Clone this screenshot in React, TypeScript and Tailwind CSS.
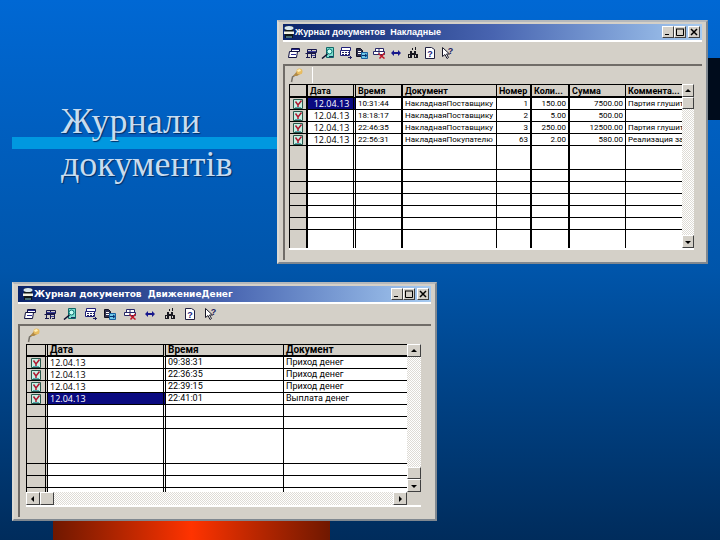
import React from 'react';
import clsx from 'clsx';

type Line = 'single' | 'thick' | 'double';

interface Column {
  title: string;
  width?: number;
  line: Line;
  align?: 'right';
}

interface JournalRow {
  cells: string[];
  selected?: boolean;
}

const lineClass: Record<Line, string> = {
  single: 'border-r',
  thick: 'border-r-2',
  double: 'border-r-[3px] border-double',
};

const invoiceColumns: Column[] = [
  { title: 'Дата', width: 48, line: 'double' },
  { title: 'Время', width: 47, line: 'thick' },
  { title: 'Документ', width: 94, line: 'single' },
  { title: 'Номер', width: 35, line: 'thick', align: 'right' },
  { title: 'Коли...', width: 38, line: 'thick', align: 'right' },
  { title: 'Сумма', width: 56, line: 'single', align: 'right' },
  { title: 'Коммента...', line: 'single' },
];

const invoiceRows: JournalRow[] = [
  { cells: ['12.04.13', '10:31:44', 'НакладнаяПоставщику', '1', '150.00', '7500.00', 'Партия глушит'], selected: true },
  { cells: ['12.04.13', '18:18:17', 'НакладнаяПоставщику', '2', '5.00', '500.00', ''] },
  { cells: ['12.04.13', '22:46:35', 'НакладнаяПоставщику', '3', '250.00', '12500.00', 'Партия глушит'] },
  { cells: ['12.04.13', '22:56:31', 'НакладнаяПокупателю', '63', '2.00', '580.00', 'Реализация за'] },
];

const moneyColumns: Column[] = [
  { title: 'Дата', width: 118, line: 'double' },
  { title: 'Время', width: 118, line: 'single' },
  { title: 'Документ', line: 'single' },
];

const moneyRows: JournalRow[] = [
  { cells: ['12.04.13', '09:38:31', 'Приход денег'] },
  { cells: ['12.04.13', '22:36:35', 'Приход денег'] },
  { cells: ['12.04.13', '22:39:15', 'Приход денег'] },
  { cells: ['12.04.13', '22:41:01', 'Выплата денег'], selected: true },
];

const toolIcons: { label: string; art: React.ReactNode }[] = [
  {
    label: 'Новый',
    art: (
      <>
        <path d="M4.5 1.5h8v3h-8zM2.5 4.5h8l-1 6h-8z" fill="#fff" stroke="#101040" />
        <path d="M5 2.5h7M4 7.5h5" stroke="#2a2a90" />
      </>
    ),
  },
  {
    label: 'Открыть',
    art: (
      <>
        <path d="M3.5 2.5h9v3h-9zM1.5 6.5h10M3.5 4v7M7.5 2v9M2 10.5h4M9 10.5h3M11.5 6v4" fill="none" stroke="#18184c" />
        <path d="M4 4.5h8M8 8.5h3" stroke="#40409c" />
      </>
    ),
  },
  {
    label: 'Просмотр',
    art: (
      <>
        <path d="M5.5.5h7v10h-7z" fill="#7fe0d0" stroke="#106868" />
        <circle cx="8.5" cy="4.5" r="2.5" fill="#c8fff4" stroke="#087070" />
        <path d="M6.5 7L1 11.5" stroke="#101030" strokeWidth="1.5" />
        <path d="M8 9.5h4" stroke="#203060" />
      </>
    ),
  },
  {
    label: 'Копировать строку',
    art: (
      <>
        <path d="M3.5.5h9v3h-9zM2.5 3.5h9v5h-9z" fill="#fff" stroke="#202078" />
        <path d="M4 5.5h7M4 7.5h7" stroke="#202060" strokeDasharray="2 1" />
        <path d="M10 10.5h4M12.5 9v3" stroke="#202060" />
      </>
    ),
  },
  {
    label: 'Ввести на основании',
    art: (
      <>
        <path d="M1.5 1.5h4l2 2v6h-6z" fill="#303050" stroke="#101020" />
        <path d="M3 4.5h3M3 6.5h3" stroke="#fff" />
        <path d="M6.5 5.5h6v6h-6z" fill="#70c8e8" stroke="#1860a0" />
        <path d="M7 8.5h4M10 7l2 1.5-2 1.5" fill="none" stroke="#083070" />
      </>
    ),
  },
  {
    label: 'Удалить',
    art: (
      <>
        <path d="M3.5 1.5h8v3h-8zM1.5 4.5h11v3h-11z" fill="#fff" stroke="#282868" />
        <path d="M7 2v5" stroke="#282868" />
        <path d="M6.5 6.5l6 5M12.5 6l-5 5.5" stroke="#c01828" strokeWidth="1.5" />
      </>
    ),
  },
  {
    label: 'Интервал',
    art: <path d="M2 6l3-3v2h4V3l3 3-3 3V7H5v2z" fill="#18188c" />,
  },
  {
    label: 'Найти',
    art: (
      <>
        <path d="M4 4h2v3H4zM8 4h2v3H8zM2 7h4v4H2zM8 7h4v4H8zM6 6h2v2H6z" fill="#181820" />
        <path d="M3.5 8v2M9.5 8v2" stroke="#d4d0c8" />
        <path d="M6.5 1v2M9.5 0v3" stroke="#181820" />
      </>
    ),
  },
  {
    label: 'Справка',
    art: (
      <>
        <path d="M2.5.5h6l3 2v9h-9z" fill="#fff" stroke="#202040" />
        <text x="7" y="9.5" textAnchor="middle" fontSize="9" fontWeight="bold" fill="#18187c">?</text>
      </>
    ),
  },
  {
    label: 'Что это?',
    art: (
      <>
        <path d="M2.5.5v9l2.5-2 2 4 1.5-1-2-3.5h3z" fill="#fff" stroke="#181828" />
        <text x="10.5" y="7" textAnchor="middle" fontSize="9" fontWeight="bold" fill="#202060">?</text>
      </>
    ),
  },
];

const Pencil = () => (
  <svg viewBox="0 0 16 16" className="h-4 w-4" aria-hidden="true">
    <path d="M2.5 15l1-5 3-2" fill="none" stroke="#77736b" strokeWidth="1.5" />
    <path d="M4 9l5-6 4 3-5 3z" fill="#b08a48" />
    <circle cx="10.5" cy="4.5" r="3" fill="#e8bc60" />
    <path d="M8 3l3-1 1 2-3 1z" fill="#fff0b8" />
  </svg>
);

const RowMark = () => (
  <svg viewBox="0 0 10 10" className="mx-auto h-2.5 w-2.5" aria-hidden="true">
    <path d="M.5.5h9v9h-9z" fill="#c8f0e4" stroke="#28584c" />
    <path d="M2 8.5h6" stroke="#58a8b0" />
    <path d="M2.5 2.5l2.5 3.500 3.500-4.500M5 6v2" fill="none" stroke="#b01830" strokeWidth="1.5" />
  </svg>
);

const AppIcon = () => (
  <svg viewBox="0 0 12 14" className="h-3.5 w-3 shrink-0" aria-hidden="true">
    <path d="M2 1h8v12H2z" fill="#101818" />
    <ellipse cx="6" cy="3" rx="4.5" ry="2" fill="#d8e8f0" />
    <path d="M1 6.5h10v2.5H1z" fill="#f4f4e4" />
    <path d="M3 11h6v2H3z" fill="#487078" />
  </svg>
);

const bevel = 'flex items-center justify-center border border-t-white border-l-white border-r-[#404040] border-b-[#404040] bg-[#d4d0c8]';
const dither = 'bg-[repeating-conic-gradient(#ffffff_0_25%,#dedbd5_0_50%)] bg-size-[2px_2px]';

const arrowPaths = {
  up: 'M1 5l3-3 3 3z',
  down: 'M1 3l3 3 3-3z',
  left: 'M5 1L2 4l3 3z',
  right: 'M3 1l3 3-3 3z',
};

const ScrollButton = ({ dir, label }: { dir: keyof typeof arrowPaths; label: string }) => (
  <button type="button" aria-label={label} className={clsx(bevel, 'h-[13px] shrink-0', (dir === 'left' || dir === 'right') && 'w-3.5')}>
    <svg viewBox="0 0 8 8" className="h-2 w-2" aria-hidden="true">
      <path d={arrowPaths[dir]} fill="#000" />
    </svg>
  </button>
);

const WindowButtons = () => (
  <div className="mr-0.5 flex h-3">
    <button type="button" aria-label="Свернуть" className={clsx(bevel, 'w-3')}>
      <svg viewBox="0 0 8 8" className="h-2 w-2"><path d="M1 6.5h4" stroke="#000" /></svg>
    </button>
    <button type="button" aria-label="Развернуть" className={clsx(bevel, 'w-3')}>
      <svg viewBox="0 0 8 8" className="h-2 w-2"><path d="M.5 1v6.5h7V1M0 1h8" fill="none" stroke="#000" /></svg>
    </button>
    <button type="button" aria-label="Закрыть" className={clsx(bevel, 'ml-0.5 w-3')}>
      <svg viewBox="0 0 8 8" className="h-2 w-2"><path d="M1 1l6 6M7 1L1 7" stroke="#000" strokeWidth="1.5" /></svg>
    </button>
  </div>
);

interface JournalWindowProps {
  title: string;
  titleClass: string;
  toolbarClass: string;
  slotClass: string;
  panelClass: string;
  tabClass?: string;
  children: React.ReactNode;
}

const JournalWindow: React.FC<JournalWindowProps> = ({ title, titleClass, toolbarClass, slotClass, panelClass, tabClass, children }) => (
  <section className="border-2 border-t-[#b4b8bc] border-l-[#dcdad4] border-r-[#808890] border-b-[#808890] bg-[#d4d0c8] px-1 py-0.5 font-['Liberation_Sans',sans-serif]">
    <header className="flex h-4 items-center bg-linear-to-r from-[#0a246a] via-[#4864b0] to-[#a6caf0]">
      <h2 className={clsx('flex flex-1 items-center font-bold whitespace-pre text-white', titleClass)}>
        <AppIcon />
        {title}
      </h2>
      <WindowButtons />
    </header>
    <div className={clsx('flex items-center border-t-2 border-white pl-0.5', toolbarClass)}>
      {toolIcons.map((tool) => (
        <button key={tool.label} type="button" aria-label={tool.label} className={clsx('flex justify-center', slotClass)}>
          <svg viewBox="0 0 14 12" className="h-3 w-3.5">{tool.art}</svg>
        </button>
      ))}
    </div>
    <div className={clsx('border-t-2 border-l-2 border-t-[#706c68] border-l-[#706c68] pb-2.5', panelClass)}>
      <div className="flex h-[18px] items-center">
        <div className={clsx('flex h-4 w-6', tabClass)}>
          <Pencil />
        </div>
      </div>
      <div className="border-b-2 border-white">{children}</div>
    </div>
  </section>
);

interface JournalTableProps {
  columns: Column[];
  rows: JournalRow[];
  // heights of the unused rows under the data
  blanks: string[];
  markLine: Line;
  markWidth: number;
  headClass: string;
  cellClass: string;
  dateClass: string;
}

const JournalTable: React.FC<JournalTableProps> = ({ columns, rows, blanks, markLine, markWidth, headClass, cellClass, dateClass }) => (
  <table className="w-full table-fixed border-separate border-spacing-0 border-l border-black bg-white font-['Roboto',sans-serif] leading-[11px] whitespace-nowrap text-black">
    <colgroup>
      <col style={{ width: markWidth }} />
      {columns.map((col) => (
        <col key={col.title} style={{ width: col.width }} />
      ))}
    </colgroup>
    <thead>
      <tr className={clsx('bg-[#d4d0c8] leading-[10px]', headClass)}>
        <th className={clsx('border-t border-b-2 border-black p-0', lineClass[markLine])} aria-label="Состояние" />
        {columns.map((col, i) => (
          <th
            key={col.title}
            scope="col"
            className={clsx('border-t border-b-2 border-black p-0 pl-0.5 text-left font-bold', i < columns.length - 1 && lineClass[col.line])}
          >
            {col.title}
          </th>
        ))}
      </tr>
    </thead>
    <tbody>
      {rows.map((row) => (
        <tr key={row.cells[1]} className="h-3">
          <td className={clsx('border-b border-black bg-[#d4d0c8] p-0', lineClass[markLine])}>
            <RowMark />
          </td>
          {row.cells.map((cell, i) => (
            <td
              key={columns[i].title}
              className={clsx(
                'border-b border-black p-0',
                columns[i].align === 'right' ? 'pr-0.5 text-right' : 'pl-0.5',
                i < columns.length - 1 && lineClass[columns[i].line],
                i === 0 ? dateClass : cellClass,
                i === 0 && row.selected && 'bg-[#0a0a80] text-white',
              )}
            >
              {cell}
            </td>
          ))}
        </tr>
      ))}
      {blanks.map((height, r) => (
        <tr key={r} className={height}>
          <td className={clsx('border-black bg-[#d4d0c8] p-0', lineClass[markLine], r < blanks.length - 1 && 'border-b')} />
          {columns.map((col, i) => (
            <td
              key={col.title}
              className={clsx('border-black p-0', i < columns.length - 1 && lineClass[col.line], r < blanks.length - 1 && 'border-b')}
            />
          ))}
        </tr>
      ))}
    </tbody>
  </table>
);

export default function App() {
  return (
    <main className="relative isolate flex min-h-screen flex-col overflow-hidden bg-linear-to-b from-[#0068d4] via-[#0055aa] to-[#002c5c] pt-5">
      <div className="absolute top-[137px] left-3 -z-10 h-3 w-1/2 bg-[#0098e0]" />
      <div className="absolute top-[58px] right-0 -z-10 h-[62px] w-4 bg-[#000c1c]" />

      <div className="flex items-start pr-3">
        <h1 className="mt-20 w-[277px] shrink-0 pl-[61px] font-['Liberation_Serif',serif] text-[36px] leading-[43px] text-[#c8dcf0] text-shadow-[1px_1px_1px_#003068]">
          Журнали документів
        </h1>
        <div className="min-w-0 flex-1">
          <JournalWindow
            title="Журнал документов  Накладные"
            titleClass="text-[9px] leading-4"
            toolbarClass="h-6"
            slotClass="w-[17px]"
            panelClass="pl-1 pr-2"
            tabClass="border-r border-white"
          >
            <div className="flex">
              <div className="min-w-0 flex-1">
                <JournalTable
                  columns={invoiceColumns}
                  rows={invoiceRows}
                  blanks={['h-6', 'h-3', 'h-3', 'h-3', 'h-3', 'h-3', 'h-[18px]']}
                  markLine="thick"
                  markWidth={18}
                  headClass="h-3.5 text-[9px]"
                  cellClass="text-[8px]"
                  dateClass="text-center font-['Open_Sans',sans-serif] text-[9px]"
                />
              </div>
              <div className={clsx('flex w-3 flex-col', dither)}>
                <ScrollButton dir="up" label="Вверх" />
                <div className={clsx(bevel, 'h-3')} />
                <div className="flex-1" />
                <ScrollButton dir="down" label="Вниз" />
              </div>
            </div>
          </JournalWindow>
        </div>
      </div>

      <div className="mt-[18px] ml-3 w-[425px]">
        <JournalWindow
          title="Журнал документов  ДвижениеДенег"
          titleClass="pl-1 font-['DejaVu_Sans',sans-serif] text-[9px] leading-4"
          toolbarClass="h-[22px]"
          slotClass="w-5"
          panelClass="pl-1.5 pr-2.5"
        >
          <div className="flex">
            <div className="min-w-0 flex-1">
              <JournalTable
                columns={moneyColumns}
                rows={moneyRows}
                blanks={['h-3', 'h-3', 'h-[35px]', 'h-3', 'h-3', 'h-1']}
                markLine="double"
                markWidth={21}
                headClass="h-[13px] text-[10px]"
                cellClass="text-[9px]"
                dateClass="font-['Open_Sans',sans-serif] text-[9px]"
              />
              <div className={clsx('flex', dither)}>
                <ScrollButton dir="left" label="Влево" />
                <div className={clsx(bevel, 'w-3.5')} />
                <div className="flex-1" />
                <ScrollButton dir="right" label="Вправо" />
              </div>
            </div>
            <div className="flex w-3.5 flex-col">
              <ScrollButton dir="up" label="Вверх" />
              <div className={clsx('flex-1', dither)} />
              <div className={clsx(bevel, 'h-3')} />
              <ScrollButton dir="down" label="Вниз" />
              <div className="h-[13px]" />
            </div>
          </div>
        </JournalWindow>
      </div>

      <div className="ml-[53px] w-[277px] flex-1 bg-linear-to-r from-[#701800] via-[#ff3300] to-[#701800]" />
    </main>
  );
}
